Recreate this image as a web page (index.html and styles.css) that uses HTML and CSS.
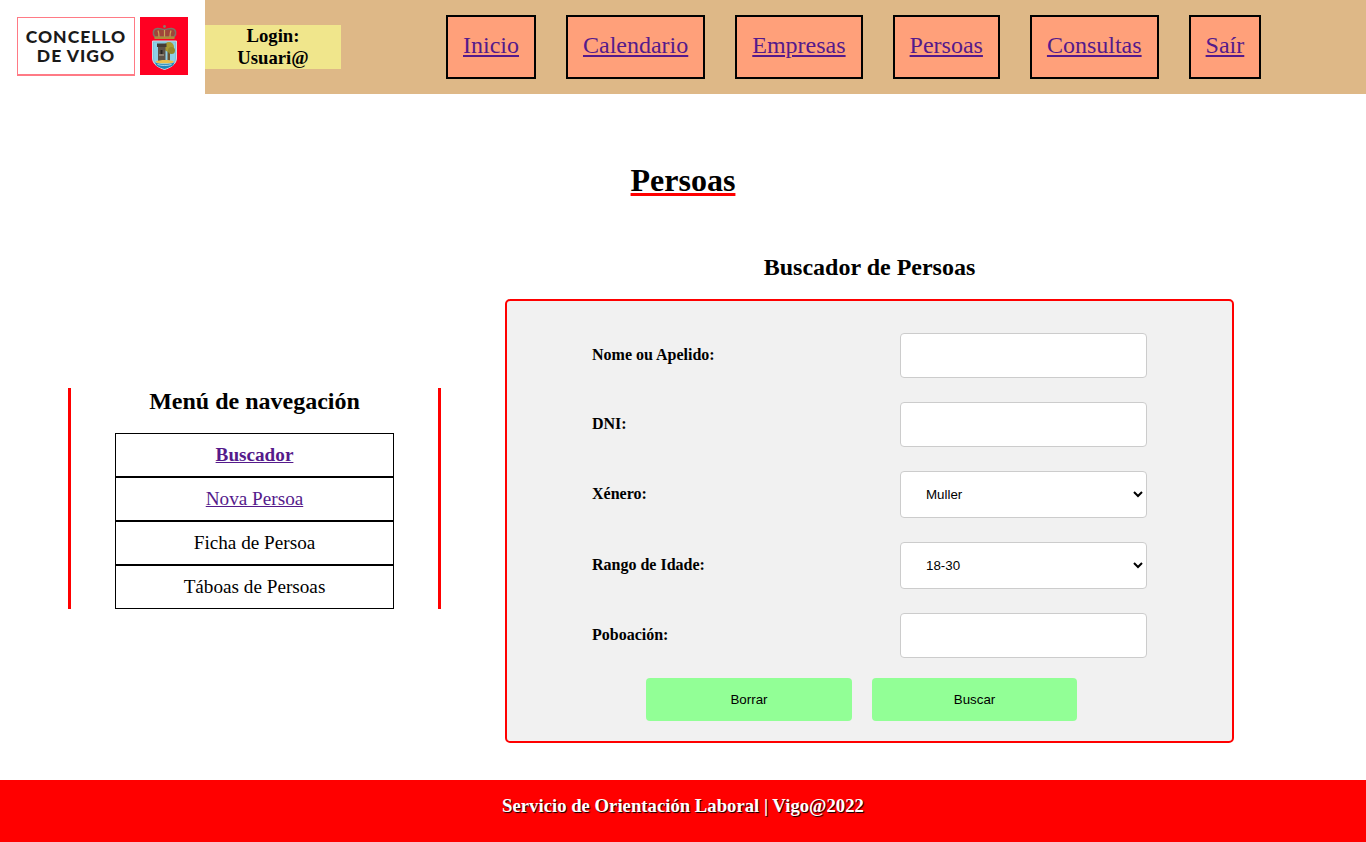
FILE: index.html
```html
<!DOCTYPE html>
<html lang="gl">
<head>
<meta charset="utf-8">
<title>Persoas</title>
<link rel="stylesheet" href="styles.css">
</head>
<body>
<header class="topbar">
  <div class="brand">
    <div class="brand-word">CONCELLO<br>DE VIGO</div>
    <div class="brand-arms">
      <svg width="48" height="58" viewBox="0 0 48 58">
        <rect width="48" height="58" fill="#ff0022"/>
        <!-- crown -->
        <circle cx="24.5" cy="9.5" r="1.4" fill="#8a7a6a"/>
        <path d="M15 20c-3-3-2-8 2-8.500 2-.5 4 .5 7.500 1 3.500-.5 5.500-1.500 7.500-1 4 .5 5 5.500 2 8.500z" fill="#a0453a" stroke="#7d7468" stroke-width="1.500"/>
        <path d="M18 13.500c.8 2 1 4 1 6.500M24.500 13v7M31 13.500c-.8 2-1 4-1 6.500" stroke="#c9a75a" stroke-width="1.200" fill="none"/>
        <path d="M14.500 19.500h20v2.500h-20z" fill="#b08a3a"/>
        <!-- shield -->
        <path d="M12.500 24h24v17c0 6.500-6 9.500-12 11.500-6-2-12-5-12-11.500z" fill="#7cc4dd" stroke="#cddde2" stroke-width="1"/>
        <path d="M14 25.500h21v15c0 5.500-5 8.500-10.500 10.300C19 49 14 46 14 40.500z" fill="#8fd0e6"/>
        <!-- tree -->
        <path d="M27.500 34h2.500v9.500h-2.500z" fill="#6b5230"/>
        <circle cx="29" cy="30" r="5" fill="#a89a32"/>
        <circle cx="31.500" cy="33.500" r="3.500" fill="#93882c"/>
        <!-- tower -->
        <path d="M18 29.500h7.500V44H18z" fill="#5d5348"/>
        <path d="M17 26.500h9.500v3.500H17z" fill="#443c34"/>
        <path d="M20.500 33h2v4h-2z" fill="#2a2622"/>
        <path d="M19 37h5v2h-5z" fill="#8c8172"/>
        <!-- island and sea -->
        <path d="M15.500 44.500c4-2 15-2 18.500 0l-2 1.800H17.500z" fill="#e9c04a"/>
        <path d="M15 45.500c5 2.300 14 2.300 19.500 0l-1.500 3c-2.500 1.500-5.500 2.500-8.500 3.500-3-1-6.500-2-8-3.500z" fill="#1f86b8"/>
        <path d="M17.500 47.500c4 1.300 10 1.300 14 0" stroke="#d9eef5" stroke-width=".8" fill="none"/>
      </svg>
    </div>
  </div>
  <div class="login">Login:<br>Usuari@</div>
  <nav class="mainnav">
    <a class="navitem" href="#inicio">Inicio</a>
    <a class="navitem" href="#calendario">Calendario</a>
    <a class="navitem" href="#empresas">Empresas</a>
    <a class="navitem" href="#persoas">Persoas</a>
    <a class="navitem" href="#consultas">Consultas</a>
    <a class="navitem" href="#sair">Saír</a>
  </nav>
</header>

<main class="page">
  <h1 class="page-title"><span>Persoas</span></h1>
  <div class="columns">
    <aside class="sidenav">
      <h2 class="sidenav-title">Menú de navegación</h2>
      <ul class="sidenav-list">
        <li><a class="current" href="#buscador">Buscador</a></li>
        <li><a href="#nova">Nova Persoa</a></li>
        <li>Ficha de Persoa</li>
        <li>Táboas de Persoas</li>
      </ul>
    </aside>
    <section class="search">
      <h2 class="search-title">Buscador de Persoas</h2>
      <form class="search-form">
        <div class="row"><label for="f1">Nome ou Apelido:</label><input id="f1" type="text"></div>
        <div class="row"><label for="f2">DNI:</label><input id="f2" type="text"></div>
        <div class="row"><label for="f3">Xénero:</label><select id="f3"><option>Muller</option><option>Home</option></select></div>
        <div class="row"><label for="f4">Rango de Idade:</label><select id="f4"><option>18-30</option><option>31-45</option></select></div>
        <div class="row"><label for="f5">Poboación:</label><input id="f5" type="text"></div>
        <div class="actions">
          <button type="button">Borrar</button>
          <button type="button">Buscar</button>
        </div>
      </form>
    </section>
  </div>
</main>

<footer class="footer">Servicio de Orientación Laboral | Vigo@2022</footer>
</body>
</html>
```

FILE: styles.css
```css
* { box-sizing: border-box; }
html, body { margin: 0; padding: 0; }
body {
  font-family: "Liberation Serif", "Times New Roman", serif;
  color: #000;
  background: #fff;
  width: 1366px;
  height: 842px;
  overflow: hidden;
  display: flex;
  flex-direction: column;
}
a { color: #551a8b; }

.topbar {
  height: 94px;
  background: #deb887;
  display: flex;
  align-items: center;
  flex: none;
}
.brand {
  width: 205px;
  height: 94px;
  background: #fff;
  display: flex;
  align-items: flex-start;
  gap: 5px;
  padding: 17px 0 0 17px;
  flex: none;
}
.brand-word {
  width: 118px;
  height: 59px;
  border: 1px solid #ff7a85;
  border-bottom-width: 2px;
  font-family: Lato, "Liberation Sans", sans-serif;
  font-weight: 900;
  font-size: 17.5px;
  line-height: 19px;
  letter-spacing: 1px;
  color: #1a1a1a;
  text-align: center;
  padding-top: 9px;
}
.brand-arms { width: 48px; height: 58px; }
.brand-arms svg { display: block; }
.login {
  width: 136px;
  height: 44px;
  background: #f0e68c;
  font-weight: bold;
  font-size: 18.72px;
  line-height: 22px;
  text-align: center;
  flex: none;
}
.mainnav {
  display: flex;
  gap: 30px;
  margin-left: 105px;
}
.navitem {
  display: block;
  height: 64px;
  padding: 13px 15px;
  border: 2px solid #000;
  background: #ffa07a;
  font-size: 24px;
  line-height: 30px;
}

.page { flex: 1; min-height: 0; display: flex; flex-direction: column; }
.page-title {
  margin: 68px 0 0;
  font-size: 32px;
  line-height: 37px;
  text-align: center;
}
.page-title span {
  text-decoration: underline;
  text-decoration-color: #f00;
  text-decoration-thickness: 3px;
}
.columns {
  display: flex;
  align-items: center;
  padding-left: 68px;
  margin-top: 55px;
}
.sidenav {
  width: 373px;
  height: 221px;
  border-left: 3px solid #f00;
  border-right: 3px solid #f00;
  flex: none;
}
.sidenav-title {
  margin: 0 0 18px;
  font-size: 24px;
  line-height: 27px;
  text-align: center;
}
.sidenav-list {
  list-style: none;
  margin: 0 0 0 44px;
  padding: 0;
  width: 279px;
  border: 1px solid #000;
  font-size: 19.2px;
  text-align: center;
}
.sidenav-list li {
  height: 44px;
  line-height: 42px;
  border-bottom: 2px solid #000;
}
.sidenav-list li:last-child { border-bottom: 0; height: 42px; }
.sidenav-list .current { font-weight: bold; }

.search { margin-left: 64px; width: 729px; flex: none; }
.search-title {
  margin: 0 0 18px;
  font-size: 24px;
  line-height: 27px;
  text-align: center;
}
.search-form {
  height: 444px;
  border: 2px solid #f00;
  border-radius: 5px;
  background: #f1f1f1;
  padding: 32px 0 0 85px;
}
.row {
  display: flex;
  align-items: center;
  margin-bottom: 24px;
}
.row label {
  width: 308px;
  padding-bottom: 2px;
  font-weight: bold;
  font-size: 16px;
}
.row input, .row select {
  width: 247px;
  border: 1px solid #ccc;
  border-radius: 4px;
  background: #fff;
  font-family: "Liberation Sans", Arial, sans-serif;
  font-size: 13.33px;
}
.row input { height: 45px; padding: 0 20px; }
.row select { height: 47px; padding: 0 20px 0 21px; }
.actions {
  display: flex;
  gap: 20px;
  margin: -4px 0 0 54px;
}
.actions button {
  height: 43px;
  border: 0;
  border-radius: 4px;
  background: #92ff96;
  color: #000;
  font-family: "Liberation Sans", Arial, sans-serif;
  font-size: 13.33px;
}
.actions button:first-child { width: 206px; }
.actions button:last-child { width: 205px; }

.footer {
  height: 62px;
  flex: none;
  background: #f00;
  color: #fff;
  font-weight: bold;
  font-size: 18.72px;
  line-height: 20px;
  padding-top: 16px;
  text-align: center;
  text-shadow: 1px 1px 1px #000;
}
```
